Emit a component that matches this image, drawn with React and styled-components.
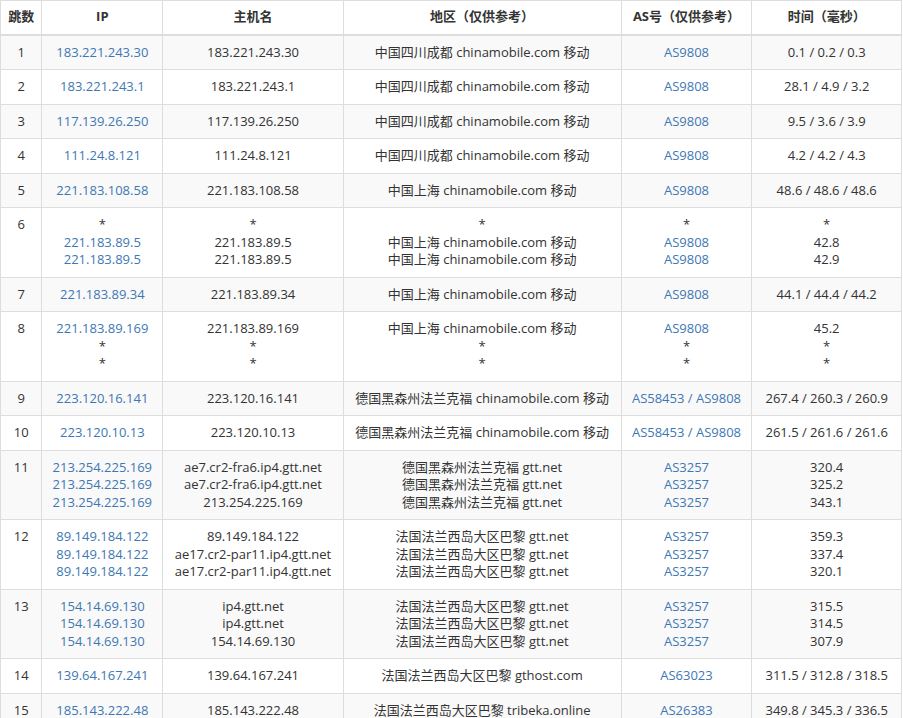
import React from 'react';
import styled, { createGlobalStyle } from 'styled-components';

const Global = createGlobalStyle`
  body { margin: 0; background: #fff; font-family: "Open Sans", "Noto Sans CJK SC", sans-serif; }
`;

const Table = styled.table`
  width: 902px;
  border-collapse: collapse;
  font-size: 13px;
  line-height: 17.5px;
  color: #333;
  border-left: 1px solid #ddd;
  border-top: 1px solid #ddd;
`;

const Th = styled.th`
  font-weight: 700;
  padding: 7px 6px 8px;
  border: 1px solid #ddd;
  border-bottom: 2px solid #ddd;
  text-align: center;
  width: ${p => p.$w}px;
`;

const Row = styled.tr`
  background: ${p => (p.$odd ? '#f9f9f9' : '#fff')};
`;

const Td = styled.td`
  padding: 8px 6px;
  border: 1px solid #ddd;
  text-align: center;
  vertical-align: top;
  white-space: nowrap;
`;

const Link = styled.div`
  color: #3d78b4;
`;

const Plain = styled.div``;

const rows = [
  [['183.221.243.30'], ['183.221.243.30'], ['中国四川成都 chinamobile.com 移动'], ['AS9808'], ['0.1 / 0.2 / 0.3']],
  [['183.221.243.1'], ['183.221.243.1'], ['中国四川成都 chinamobile.com 移动'], ['AS9808'], ['28.1 / 4.9 / 3.2']],
  [['117.139.26.250'], ['117.139.26.250'], ['中国四川成都 chinamobile.com 移动'], ['AS9808'], ['9.5 / 3.6 / 3.9']],
  [['111.24.8.121'], ['111.24.8.121'], ['中国四川成都 chinamobile.com 移动'], ['AS9808'], ['4.2 / 4.2 / 4.3']],
  [['221.183.108.58'], ['221.183.108.58'], ['中国上海 chinamobile.com 移动'], ['AS9808'], ['48.6 / 48.6 / 48.6']],
  [['*', '221.183.89.5', '221.183.89.5'], ['*', '221.183.89.5', '221.183.89.5'], ['*', '中国上海 chinamobile.com 移动', '中国上海 chinamobile.com 移动'], ['*', 'AS9808', 'AS9808'], ['*', '42.8', '42.9']],
  [['221.183.89.34'], ['221.183.89.34'], ['中国上海 chinamobile.com 移动'], ['AS9808'], ['44.1 / 44.4 / 44.2']],
  [['221.183.89.169', '*', '*'], ['221.183.89.169', '*', '*'], ['中国上海 chinamobile.com 移动', '*', '*'], ['AS9808', '*', '*'], ['45.2', '*', '*']],
  [['223.120.16.141'], ['223.120.16.141'], ['德国黑森州法兰克福 chinamobile.com 移动'], ['AS58453 / AS9808'], ['267.4 / 260.3 / 260.9']],
  [['223.120.10.13'], ['223.120.10.13'], ['德国黑森州法兰克福 chinamobile.com 移动'], ['AS58453 / AS9808'], ['261.5 / 261.6 / 261.6']],
  [['213.254.225.169', '213.254.225.169', '213.254.225.169'], ['ae7.cr2-fra6.ip4.gtt.net', 'ae7.cr2-fra6.ip4.gtt.net', '213.254.225.169'], ['德国黑森州法兰克福 gtt.net', '德国黑森州法兰克福 gtt.net', '德国黑森州法兰克福 gtt.net'], ['AS3257', 'AS3257', 'AS3257'], ['320.4', '325.2', '343.1']],
  [['89.149.184.122', '89.149.184.122', '89.149.184.122'], ['89.149.184.122', 'ae17.cr2-par11.ip4.gtt.net', 'ae17.cr2-par11.ip4.gtt.net'], ['法国法兰西岛大区巴黎 gtt.net', '法国法兰西岛大区巴黎 gtt.net', '法国法兰西岛大区巴黎 gtt.net'], ['AS3257', 'AS3257', 'AS3257'], ['359.3', '337.4', '320.1']],
  [['154.14.69.130', '154.14.69.130', '154.14.69.130'], ['ip4.gtt.net', 'ip4.gtt.net', '154.14.69.130'], ['法国法兰西岛大区巴黎 gtt.net', '法国法兰西岛大区巴黎 gtt.net', '法国法兰西岛大区巴黎 gtt.net'], ['AS3257', 'AS3257', 'AS3257'], ['315.5', '314.5', '307.9']],
  [['139.64.167.241'], ['139.64.167.241'], ['法国法兰西岛大区巴黎 gthost.com'], ['AS63023'], ['311.5 / 312.8 / 318.5']],
  [['185.143.222.48'], ['185.143.222.48'], ['法国法兰西岛大区巴黎 tribeka.online'], ['AS26383'], ['349.8 / 345.3 / 336.5']],
];

const Lines = ({ items, link }) =>
  items.map((t, i) =>
    link && t !== '*' ? <Link key={i}>{t}</Link> : <Plain key={i}>{t}</Plain>
  );

const App = () => (
  <>
    <Global />
    <Table>
      <thead>
        <tr>
          <Th $w={44}>跳数</Th>
          <Th $w={118}>IP</Th>
          <Th $w={180}>主机名</Th>
          <Th $w={278}>地区（仅供参考）</Th>
          <Th $w={128}>AS号（仅供参考）</Th>
          <Th $w={153}>时间（毫秒）</Th>
        </tr>
      </thead>
      <tbody>
        {rows.map((r, i) => (
          <Row key={i} $odd={i % 2 === 0}>
            <Td>{i + 1}</Td>
            <Td><Lines items={r[0]} link /></Td>
            <Td><Lines items={r[1]} /></Td>
            <Td><Lines items={r[2]} /></Td>
            <Td><Lines items={r[3]} link /></Td>
            <Td><Lines items={r[4]} /></Td>
          </Row>
        ))}
      </tbody>
    </Table>
  </>
);

export default App;
